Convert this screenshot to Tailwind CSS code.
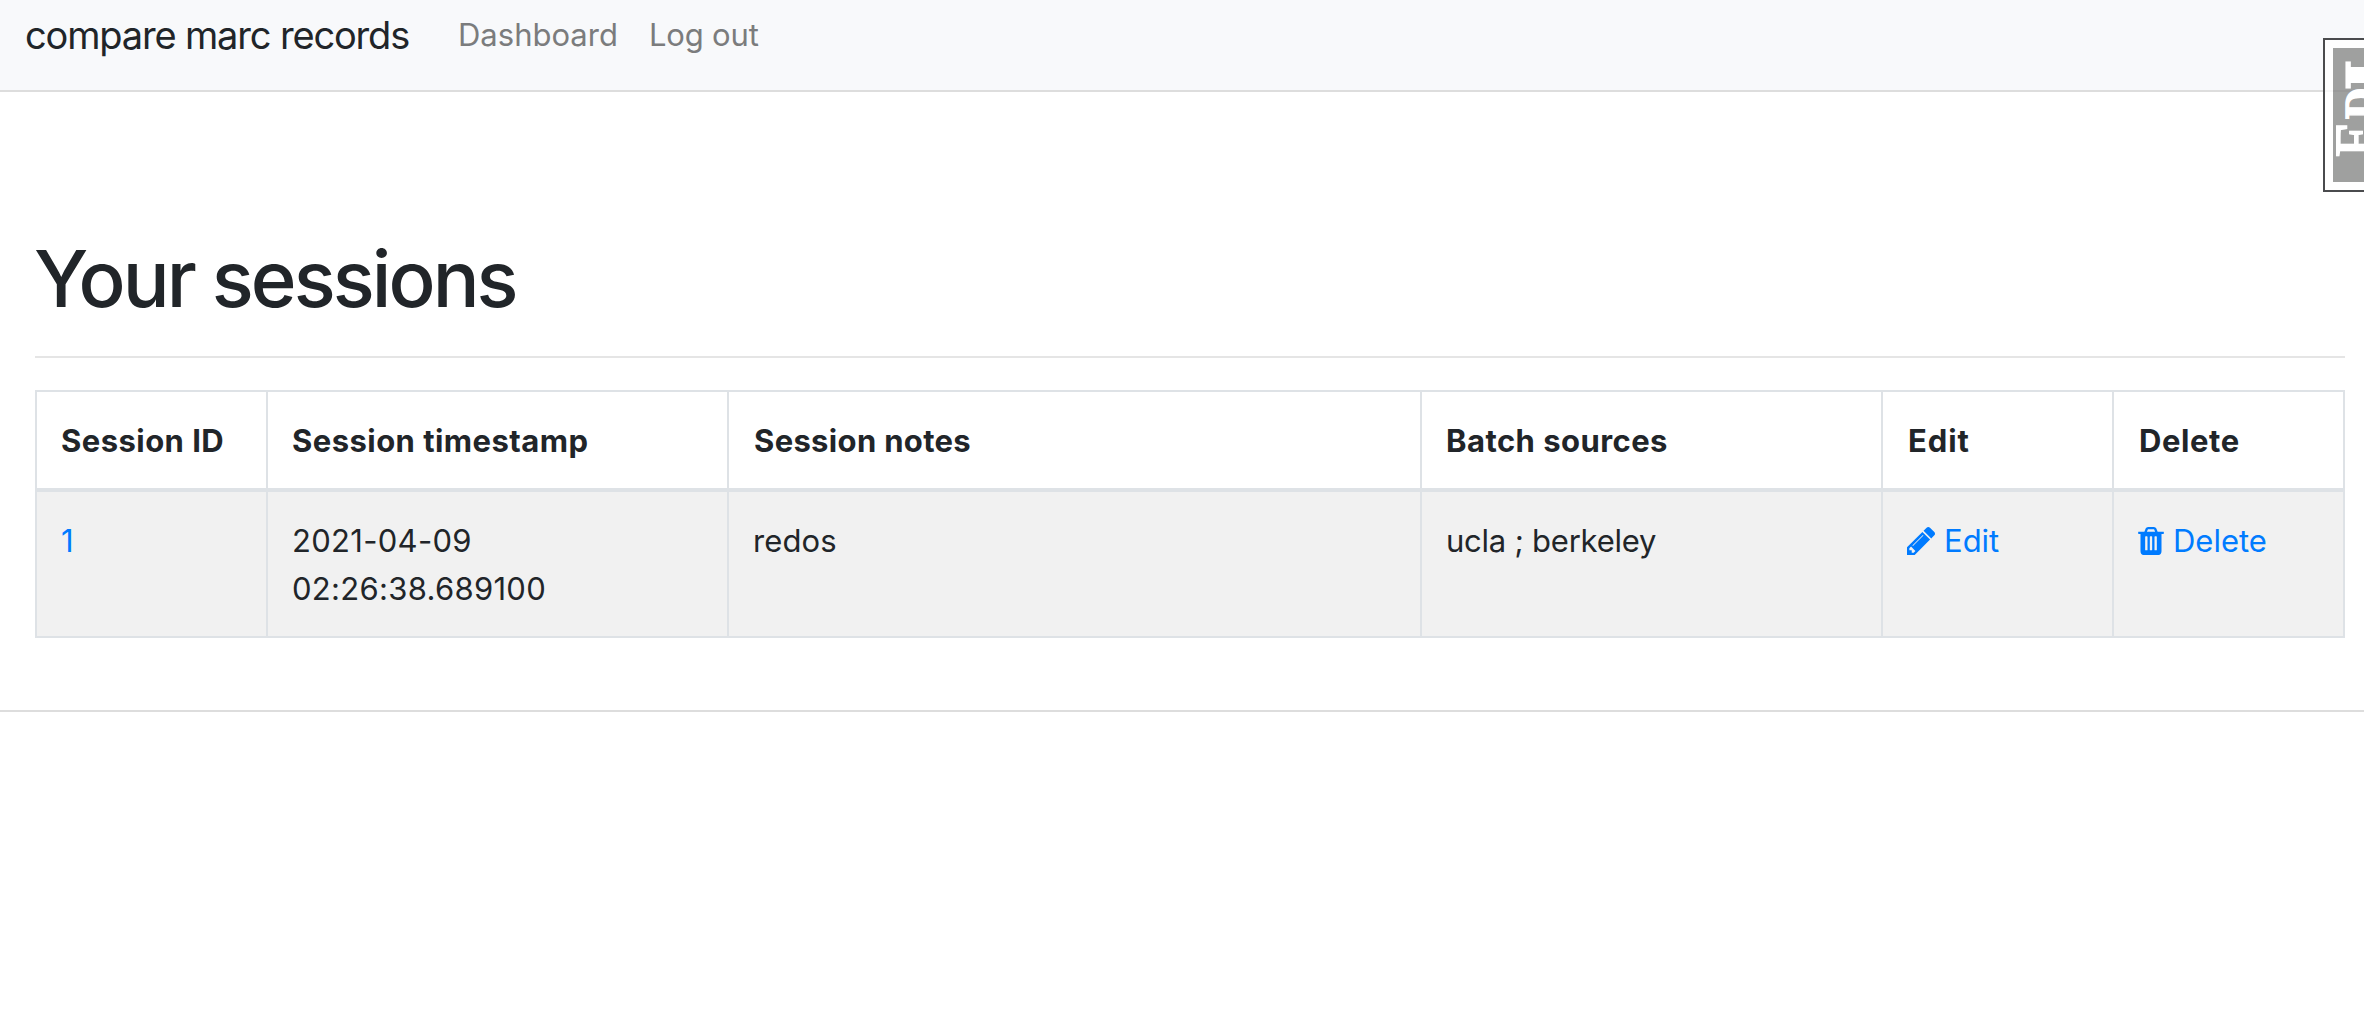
<!DOCTYPE html>
<html lang="en">
<head>
<meta charset="utf-8">
<title>compare marc records</title>
<script src="https://cdn.jsdelivr.net/npm/@tailwindcss/browser@4"></script>
</head>
<body class="relative min-h-screen overflow-hidden bg-white font-['Inter',sans-serif] text-[31px] leading-[48px] text-[#212529]">
  <nav class="flex h-[92px] items-start border-b-2 border-[#dddddd] bg-[#f8f9fb] pl-[25px]">
    <a class="mt-[11px] w-[433px] whitespace-nowrap text-[38px] tracking-[-1.16px]">compare marc records</a>
    <a class="mt-[11px] w-[191px] whitespace-nowrap text-[#7b7c7d]">Dashboard</a>
    <a class="mt-[11px] whitespace-nowrap tracking-[-0.19px] text-[#7b7c7d]">Log out</a>
  </nav>

  <main class="h-[620px] border-b-2 border-[#dddddd] pr-[19px] pl-[35px] pt-[141px]">
    <h1 class="-ml-px h-[123px] whitespace-nowrap text-[78px] leading-[92px] font-medium tracking-[-2.95px]">Your sessions</h1>
    <hr class="border-t-2 border-[#e5e5e5]">
    <div class="mt-8 border-2 border-[#dee2e6]">
      <div class="grid grid-cols-[231px_461px_693px_461px_231px_229px] border-b-4 border-[#dee2e6] font-bold tracking-[0.45px]">
        <div class="border-r-2 border-[#dee2e6] px-6 pt-[25px] pb-[23px]">Session ID</div>
        <div class="border-r-2 border-[#dee2e6] px-6 pt-[25px] pb-[23px]">Session timestamp</div>
        <div class="border-r-2 border-[#dee2e6] pr-6 pl-[25px] pt-[25px] pb-[23px] tracking-[0.33px]">Session notes</div>
        <div class="border-r-2 border-[#dee2e6] px-6 pt-[25px] pb-[23px]">Batch sources</div>
        <div class="border-r-2 border-[#dee2e6] pr-6 pl-[25px] pt-[25px] pb-[23px] tracking-[0.9px]">Edit</div>
        <div class="pr-6 pl-[25px] pt-[25px] pb-[23px] tracking-[0.6px]">Delete</div>
      </div>
      <div class="grid grid-cols-[231px_461px_693px_461px_231px_229px] bg-[#f1f1f1]">
        <div class="border-r-2 border-[#dee2e6] px-6 pt-[25px] pb-[23px] text-[#007bff]">1</div>
        <div class="border-r-2 border-[#dee2e6] px-6 pt-[25px] pb-[23px] tracking-[0.3px]">2021-04-09<br>02:26:38.689100</div>
        <div class="border-r-2 border-[#dee2e6] px-6 pt-[25px] pb-[23px] tracking-[0.13px]">redos</div>
        <div class="border-r-2 border-[#dee2e6] px-6 pt-[25px] pb-[23px] tracking-[-0.24px]">ucla ; berkeley</div>
        <div class="border-r-2 border-[#dee2e6] px-6 pt-[25px] pb-[23px] text-[#007bff]">
          <a class="flex items-start gap-[9px]">
            <svg class="mt-[10px] h-7 w-7" viewBox="128 149 1515 1515" fill="currentColor"><path d="M491 1536l91-91-235-235-91 91v107h128v128h107zm523-928q0-22-22-22-10 0-17 7l-542 542q-7 7-7 17 0 22 22 22 10 0 17-7l542-542q7-7 7-17zm-54-192l416 416-832 832h-416v-416zm683 96q0 53-37 90l-166 166-416-416 166-165q36-38 90-38 53 0 91 38l235 234q37 39 37 91z"/></svg>
            <span>Edit</span>
          </a>
        </div>
        <div class="px-6 pt-[25px] pb-[23px] text-[#007bff]">
          <a class="flex items-start gap-[9px]">
            <svg class="mt-[10px] h-7 w-[26px]" viewBox="192 128 1408 1536" fill="currentColor"><path d="M704 1376v-704q0-14-9-23t-23-9h-64q-14 0-23 9t-9 23v704q0 14 9 23t23 9h64q14 0 23-9t9-23zm256 0v-704q0-14-9-23t-23-9h-64q-14 0-23 9t-9 23v704q0 14 9 23t23 9h64q14 0 23-9t9-23zm256 0v-704q0-14-9-23t-23-9h-64q-14 0-23 9t-9 23v704q0 14 9 23t23 9h64q14 0 23-9t9-23zm-544-992h448l-48-117q-7-9-17-11h-317q-10 2-17 11zm928 32v64q0 14-9 23t-23 9h-96v948q0 83-47 143.500t-113 60.500h-832q-66 0-113-58.500t-47-141.500v-952h-96q-14 0-23-9t-9-23v-64q0-14 9-23t23-9h309l70-167q15-37 54-63t79-26h320q40 0 79 26t54 63l70 167h309q14 0 23 9t9 23z"/></svg>
            <span>Delete</span>
          </a>
        </div>
      </div>
    </div>
  </main>

  <!-- side tab running off the right edge -->
  <svg class="absolute top-[38px] right-0 h-[154px] w-[41px]" viewBox="0 0 41 154" font-family="'DejaVu Serif', serif" font-weight="700" fill="#ffffff" stroke="#ffffff">
    <rect x="1" y="1" width="60" height="152" fill="#ffffff" fill-opacity=".8" stroke="#4a4b4d" stroke-width="2"/>
    <rect x="10" y="10" width="40" height="134" fill="#9fa09f" stroke="none"/>
    <rect x="10" y="52" width="40" height="2" fill="#999999" stroke="none"/>
    <text transform="translate(53 119) rotate(-90)" font-family="'Liberation Serif', serif" font-weight="400" stroke-width="2" font-size="59" textLength="36" lengthAdjust="spacingAndGlyphs">E</text>
    <text transform="translate(53 82) rotate(-90)" stroke-width="1.5" font-size="41" textLength="32" lengthAdjust="spacingAndGlyphs">D</text>
    <text transform="translate(53 51) rotate(-90)" stroke-width="3" font-size="39" textLength="28" lengthAdjust="spacingAndGlyphs">I</text>
  </svg>
</body>
</html>
